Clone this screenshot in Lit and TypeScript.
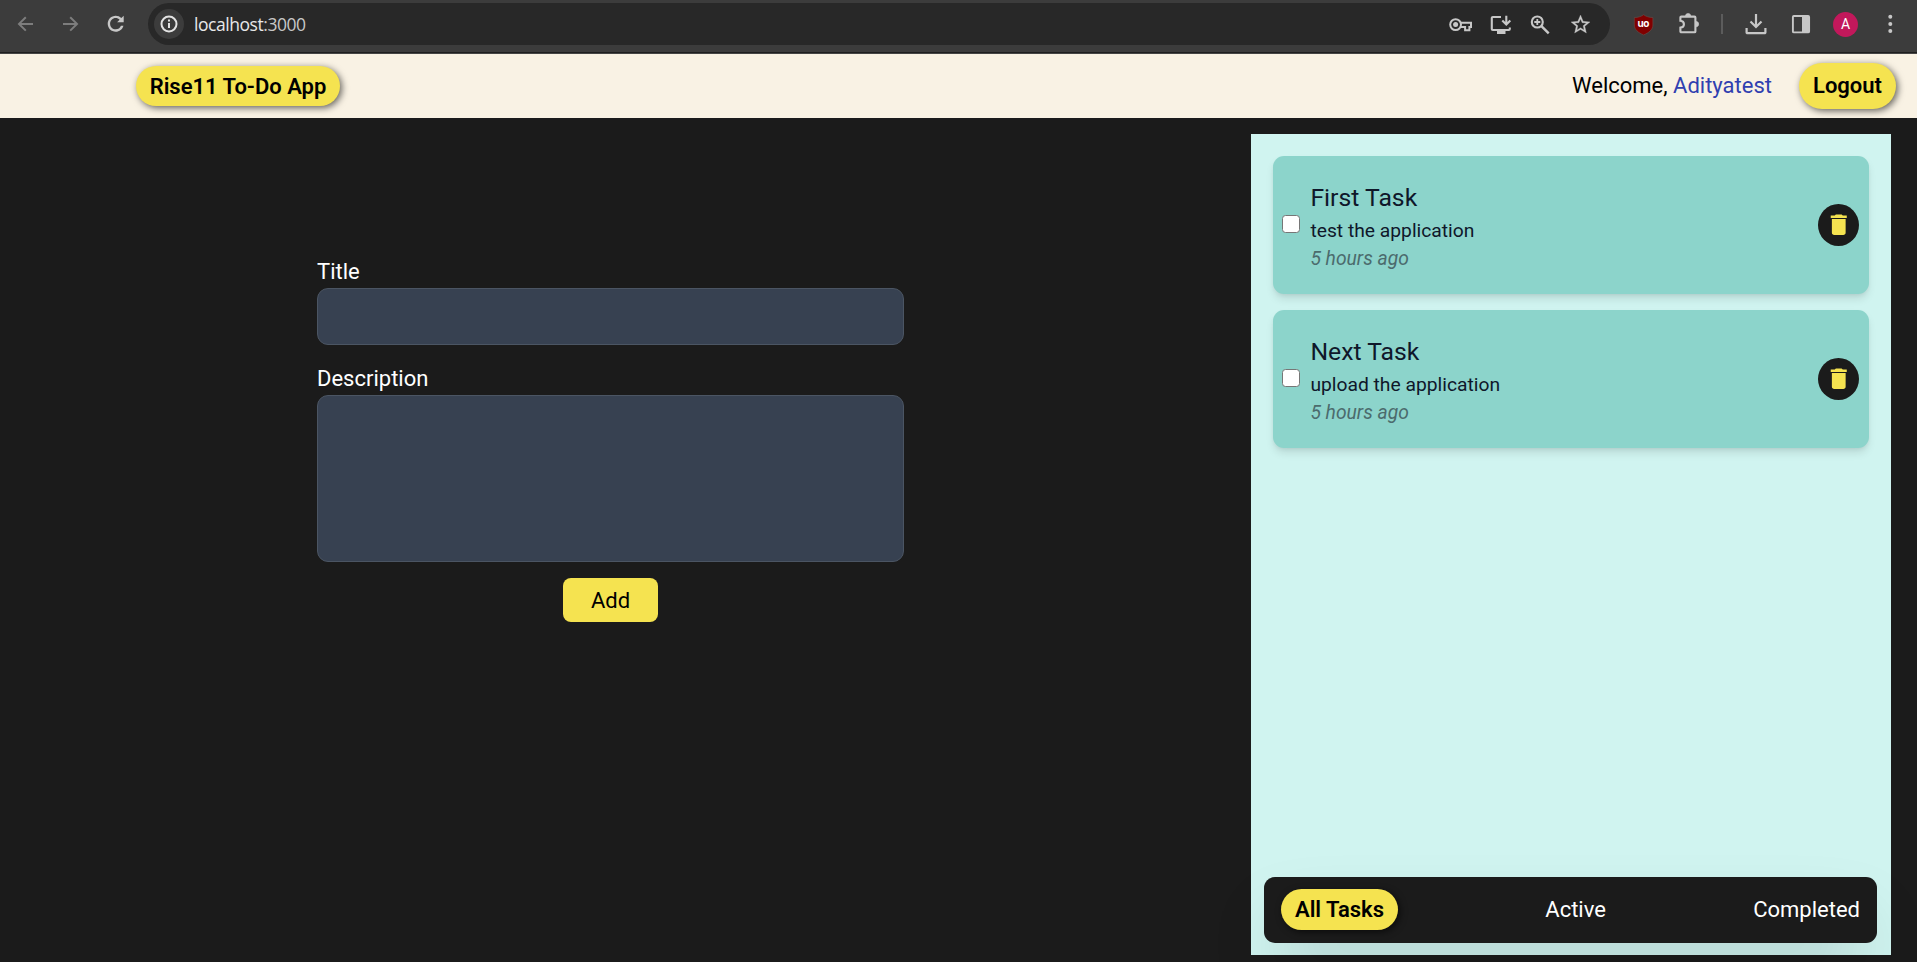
import { LitElement, html, css, svg } from "lit";
import { customElement, property, state } from "lit/decorators.js";
import { classMap } from "lit/directives/class-map.js";

const glyphs = {
  back: svg`<path d="M19 11.9H5.6M11.8 5.2L5 11.9l6.8 6.7" fill="none" stroke="#7d7d7d" stroke-width="2"/>`,
  forward: svg`<path d="M4 11.9h13.4M11.2 5.2l6.8 6.7-6.8 6.7" fill="none" stroke="#7d7d7d" stroke-width="2"/>`,
  reload: svg`<path fill="#c7c7c7" transform="translate(-.3 -.3)" d="M17.65 6.35A7.95 7.95 0 0 0 12 4c-4.42 0-7.99 3.58-7.99 8s3.57 8 7.99 8c3.73 0 6.84-2.55 7.73-6h-2.5A5.7 5.7 0 0 1 12 17.6c-3.1 0-5.6-2.5-5.6-5.6s2.5-5.6 5.6-5.6c1.5 0 2.9.6 3.9 1.6L13.4 10.6H20V4z"/>`,
  info: svg`<circle cx="12" cy="12" r="7.5" fill="none" stroke="#e3e3e3" stroke-width="2"/><path d="M12 11v5M12 7.6v1.9" stroke="#e3e3e3" stroke-width="2"/>`,
  key: svg`<g fill="none" stroke="#c7c7c7" stroke-width="2"><circle cx="7.6" cy="12.6" r="5.4"/><path d="M12.7 10.8H23v4.2h-1.6v3.2h-4.3v-3.2h-4.4"/></g><circle cx="7.6" cy="12.6" r="2.5" fill="#c7c7c7"/>`,
  install: svg`<path d="M13 5H4.800a1 1 0 0 0-1 1v11a1 1 0 0 0 1 1h16a1 1 0 0 0 1-1v-1.400" fill="none" stroke="#c7c7c7" stroke-width="2.100"/><path d="M9 19h8.500v3H9z" fill="#c7c7c7"/><path d="M18.300 3.700v8.600M14.300 8.500l4 4 4-4" fill="none" stroke="#c7c7c7" stroke-width="2.100"/>`,
  zoom: svg`<g fill="none" stroke="#c7c7c7" stroke-width="2.100"><circle cx="9.300" cy="10" r="5.500"/><path d="M13.200 13.900l7.500 7.500" stroke-width="2.500"/><path d="M6.300 10h6M9.300 7v6" stroke-width="1.800"/></g>`,
  star: svg`<path fill="#c7c7c7" stroke="#c7c7c7" stroke-width=".3" transform="translate(1.100 1.100) scale(.95)" d="M22 9.24l-7.19-.62L12 2 9.19 8.63 2 9.24l5.46 4.73L5.82 21 12 17.27 18.18 21l-1.63-7.03L22 9.24zM12 15.4l-3.76 2.27 1-4.28-3.32-2.88 4.38-.38L12 6.1l1.71 4.04 4.38.38-3.32 2.88 1 4.28L12 15.4z"/>`,
  shield: svg`<path d="M11.600 2.700c2.600 1.900 5.600 2.800 9.300 2.800v7.500c0 4.500-4 7.800-9.300 9.900-5.300-2.100-9.300-5.400-9.300-9.900V5.500c3.700 0 6.700-.9 9.300-2.800z" fill="#800000" stroke="#66504c" stroke-width=".6"/><text x="11.300" y="15.200" text-anchor="middle" font-family="Inter, sans-serif" font-weight="700" font-size="10" letter-spacing="-.5" fill="#fff">uo</text>`,
  puzzle: svg`<path d="M4.300 4.600h13.200a.9.9 0 0 1 .9.9v13.900a.9.9 0 0 1-.9.9H4.300a.9.9 0 0 1-.9-.9v-3.800c4.700-.4 4.700-6.400 0-6.800V5.500a.9.9 0 0 1 .9-.9z" fill="none" stroke="#c7c7c7" stroke-width="2.100"/><path d="M8.500 4a2.600 2.600 0 0 1 5.200 0zM19 9.400a2.700 2.700 0 0 1 0 5.400z" fill="#c7c7c7" stroke="#c7c7c7" stroke-width=".6"/>`,
  download: svg`<path d="M12 2v12.600M6.500 9.500l5.500 5.500 5.500-5.500M2.600 16v4.400a.8.8 0 0 0 .8.8h17.200a.8.8 0 0 0 .8-.8V16" fill="none" stroke="#c7c7c7" stroke-width="2.200"/>`,
  panel: svg`<rect x="3.900" y="4" width="16.200" height="16.400" rx="1" fill="none" stroke="#c7c7c7" stroke-width="1.900"/><path d="M13 4h7v16.400h-7z" fill="#c7c7c7"/>`,
  dots: svg`<g fill="#c7c7c7"><circle cx="12.300" cy="4.800" r="2"/><circle cx="12.300" cy="11.900" r="2"/><circle cx="12.300" cy="19" r="2"/></g>`,
  trash: svg`<path fill="#f5e350" d="M6 19c0 1.100.9 2 2 2h8c1.100 0 2-.9 2-2V7H6v12zM19 4h-3.500l-1-1h-5l-1 1H5v2h14V4z"/>`,
};

const icon = (name: keyof typeof glyphs) =>
  html`<svg class="icon" viewBox="0 0 24 24">${glyphs[name]}</svg>`;

@customElement("browser-bar")
export class BrowserBar extends LitElement {
  static styles = css`
    :host {
      display: flex;
      height: 54px;
      box-sizing: border-box;
      padding: 3px 15px 8px 14px;
      align-items: center;
      background: #3c3c3c;
      border-bottom: 1px solid #454545;
      box-shadow: inset 0 -1px #1f1f1f;
    }
    .icon { display: block; width: 24px; height: 24px; flex: none; }
    .nav { display: flex; gap: 21px; }
    .omnibox {
      flex: 1;
      display: flex;
      align-items: center;
      height: 42px;
      margin: 0 22px 0 20px;
      padding: 0 18px 0 6px;
      box-sizing: border-box;
      border-radius: 21px;
      background: #282828;
    }
    .site {
      width: 30px;
      height: 30px;
      display: grid;
      place-items: center;
      border-radius: 50%;
      background: #3c3c3c;
    }
    .url {
      flex: 1;
      margin-left: 10px;
      font: 17.5px/24px "Open Sans", "Noto Sans", sans-serif;
      letter-spacing: -0.45px;
      color: #c7c7c7;
    }
    .host { color: #e8e8e8; }
    .actions { display: flex; gap: 16px; }
    .tools { display: flex; align-items: center; gap: 21px; }
    .rule { width: 2px; height: 20px; margin: 0 -0.75px; background: #5c5c5c; }
    .avatar {
      width: 25px;
      height: 25px;
      margin: 0 -1px 0 -0.5px;
      border-radius: 50%;
      background: #c2185b;
      color: #fff;
      font: 14px/25px Roboto, sans-serif;
      text-align: center;
    }
  `;

  render() {
    return html`
      <div class="nav">${icon("back")}${icon("forward")}${icon("reload")}</div>
      <div class="omnibox">
        <span class="site">${icon("info")}</span>
        <span class="url"><span class="host">localhost</span>:3000</span>
        <div class="actions">${icon("key")}${icon("install")}${icon("zoom")}${icon("star")}</div>
      </div>
      <div class="tools">
        ${icon("shield")}${icon("puzzle")}
        <span class="rule"></span>
        ${icon("download")}${icon("panel")}
        <span class="avatar">A</span>
        ${icon("dots")}
      </div>
    `;
  }
}

interface Task {
  title: string;
  description: string;
  age: string;
}

@customElement("task-card")
export class TaskCard extends LitElement {
  @property({ attribute: false }) task!: Task;

  static styles = css`
    :host {
      display: flex;
      align-items: center;
      height: 138px;
      box-sizing: border-box;
      padding: 0 10px 0 9px;
      border-radius: 11px;
      background: #8cd4cb;
      box-shadow: 0 5.5px 8.25px -1.4px rgba(0, 0, 0, 0.1), 0 2.75px 5.5px -2.75px rgba(0, 0, 0, 0.1);
      color: #0f172a;
    }
    .check {
      appearance: none;
      width: 18px;
      height: 18px;
      margin: 0 10.4px 2px 0;
      border: 1.4px solid #767676;
      border-radius: 3.5px;
      background: #fff;
    }
    .body { flex: 1; }
    .title { font-size: 24.75px; line-height: 38.5px; }
    .text { font-size: 19.25px; line-height: 27.5px; }
    .age { font-size: 19.25px; line-height: 27px; font-style: italic; color: #4b6b6d; }
    .remove {
      display: grid;
      place-items: center;
      width: 41px;
      height: 42px;
      padding: 0;
      border: 0;
      border-radius: 50%;
      background: #1b1b1b;
    }
    .icon { display: block; width: 27.5px; height: 27.5px; }
  `;

  render() {
    return html`
      <input class="check" type="checkbox" />
      <div class="body">
        <div class="title">${this.task.title}</div>
        <div class="text">${this.task.description}</div>
        <div class="age">${this.task.age}</div>
      </div>
      <button class="remove">${icon("trash")}</button>
    `;
  }
}

@customElement("app-root")
export class AppRoot extends LitElement {
  @state() private filter = "All Tasks";

  private tasks: Task[] = [
    { title: "First Task", description: "test the application", age: "5 hours ago" },
    { title: "Next Task", description: "upload the application", age: "5 hours ago" },
  ];

  static styles = css`
    :host {
      display: flex;
      flex-direction: column;
      height: 962px;
      overflow: hidden;
      background: #1b1b1b;
      color: #fff;
      font: 22px/33px Roboto, sans-serif;
    }
    .header {
      display: flex;
      align-items: center;
      height: 64px;
      box-sizing: border-box;
      padding: 0 21px 0 136px;
      background: #f9f2e4;
      color: #000;
    }
    .pill {
      box-sizing: border-box;
      border: 0;
      border-radius: 22px;
      background: #f5e350;
      color: #000;
      font: 600 22px/33px Roboto, sans-serif;
      text-align: center;
      white-space: nowrap;
      padding: 0;
      box-shadow: 2px 2px 7px rgba(0, 0, 0, 0.6);
    }
    .brand { width: 204px; height: 40px; line-height: 41px; }
    .welcome { margin: 0 27px 2px auto; }
    .user { color: #303fb0; }
    .logout { width: 97px; height: 46px; border-radius: 23px; padding-bottom: 2px; }
    .main {
      flex: 1;
      display: flex;
      justify-content: space-between;
      padding: 16px 26px 7px 317px;
    }
    .form {
      display: flex;
      flex-direction: column;
      width: 587px;
      padding-top: 121px;
    }
    .field {
      display: block;
      box-sizing: border-box;
      width: 100%;
      margin: 0 0 17px;
      border: 1px solid #4b5563;
      border-radius: 11px;
      background: #374151;
      color: #fff;
      resize: none;
    }
    .line { height: 57px; }
    .area { height: 167px; margin-bottom: 16px; }
    .add {
      align-self: center;
      width: 95px;
      height: 44px;
      padding: 1px 0 0;
      border: 0;
      border-radius: 8px;
      background: #f5e350;
      color: #000;
      font: 22px/43px Roboto, sans-serif;
    }
    .panel {
      display: flex;
      flex-direction: column;
      width: 640px;
      box-sizing: border-box;
      padding: 22px 14px 12px 13px;
      background: #d0f4f0;
    }
    .list { display: flex; flex-direction: column; gap: 16px; margin: 0 8px 0 9px; }
    .filters {
      display: flex;
      align-items: center;
      justify-content: space-between;
      height: 66px;
      box-sizing: border-box;
      margin-top: auto;
      padding: 0 17px;
      border-radius: 11px;
      background: #1b1b1b;
      box-shadow: 0 34px 69px -16.5px rgba(0, 0, 0, 0.25);
    }
    .filter { margin-bottom: 2px; }
    .filter.pill { width: 117px; height: 41px; line-height: 41px; margin-bottom: 1px; }
  `;

  render() {
    return html`
      <browser-bar></browser-bar>
      <header class="header">
        <div class="pill brand">Rise11 To-Do App</div>
        <div class="welcome">Welcome, <span class="user">Adityatest</span></div>
        <button class="pill logout">Logout</button>
      </header>
      <main class="main">
        <div class="form">
          <label class="label" for="title">Title</label>
          <input class="field line" id="title" />
          <label class="label" for="description">Description</label>
          <textarea class="field area" id="description"></textarea>
          <button class="add">Add</button>
        </div>
        <section class="panel">
          <div class="list">
            ${this.tasks.map((t) => html`<task-card .task=${t}></task-card>`)}
          </div>
          <nav class="filters">
            ${["All Tasks", "Active", "Completed"].map(
              (f) => html`<span
                class=${classMap({ filter: true, pill: f === this.filter })}
                @click=${() => (this.filter = f)}
              >${f}</span>`
            )}
          </nav>
        </section>
      </main>
    `;
  }
}
